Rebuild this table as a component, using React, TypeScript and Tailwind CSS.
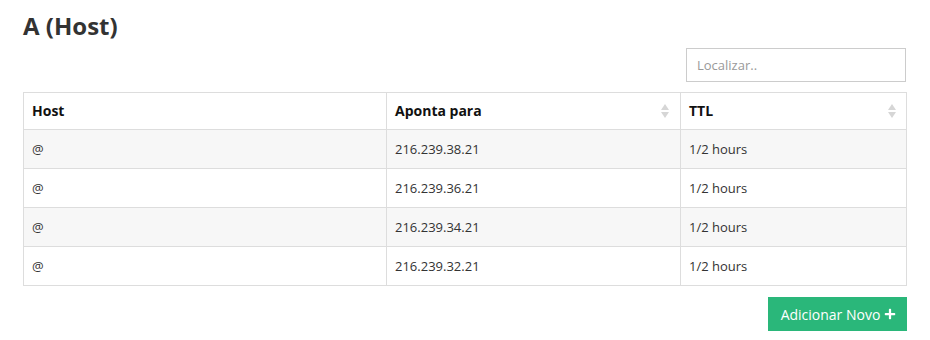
import { FaPlus } from 'react-icons/fa'

interface HostRecord {
    host: string
    target: string
    ttl: string
}

const records: HostRecord[] = [
    { host: '@', target: '216.239.38.21', ttl: '1/2 hours' },
    { host: '@', target: '216.239.36.21', ttl: '1/2 hours' },
    { host: '@', target: '216.239.34.21', ttl: '1/2 hours' },
    { host: '@', target: '216.239.32.21', ttl: '1/2 hours' },
]

const SortIcon = () => (
    <svg width="8" height="14" viewBox="0 0 8 14" className="ml-auto">
        <path d="M4 0 L8 6 L0 6 Z" fill="#d6d6d6" />
        <path d="M4 14 L8 8 L0 8 Z" fill="#d6d6d6" />
    </svg>
)

const App = () => {
    return (
        <div className="w-[930px] h-[340px] bg-white text-[#333] font-['Open_Sans',sans-serif] pl-[23px] pr-[23px]">
            <h2 className="text-[24px] font-bold leading-[30px] pt-[11px] text-[#333]">A (Host)</h2>

            <div className="flex justify-end mt-[7px]">
                <input
                    className="w-[220px] h-[34px] mr-[1px] border border-[#ccc] px-[10px] text-[13px] placeholder:text-[#999] outline-none"
                    placeholder="Localizar.."
                />
            </div>

            <table className="w-[884px] mt-[10px] border-collapse border border-[#ddd] text-[13px]">
                <thead>
                    <tr>
                        <th className="w-[363px] border border-[#ddd] px-[8px] py-[8px] text-left font-bold text-[14px] leading-[20px] text-[#111]">Host</th>
                        <th className="w-[294px] border border-[#ddd] px-[8px] py-[8px] text-left font-bold text-[14px] leading-[20px] text-[#111]">
                            <div className="flex items-center pr-[3px]">
                                Aponta para
                                <SortIcon />
                            </div>
                        </th>
                        <th className="border border-[#ddd] px-[8px] py-[8px] text-left font-bold text-[14px] leading-[20px] text-[#111]">
                            <div className="flex items-center pr-[2px]">
                                TTL
                                <SortIcon />
                            </div>
                        </th>
                    </tr>
                </thead>
                <tbody>
                    {records.map((r, i) => (
                        <tr key={r.target} className={i % 2 === 0 ? 'bg-[#f7f7f7]' : 'bg-white'}>
                            <td className="border border-[#ddd] px-[8px] py-[8px] leading-[22px]">{r.host}</td>
                            <td className="border border-[#ddd] px-[8px] py-[8px] leading-[22px]">{r.target}</td>
                            <td className="border border-[#ddd] px-[8px] py-[8px] leading-[22px]">{r.ttl}</td>
                        </tr>
                    ))}
                </tbody>
            </table>

            <div className="flex justify-end mt-[11px]">
                <button className="h-[34px] w-[139px] bg-[#2ab77a] text-white text-[14px] flex items-center justify-center gap-[4px] pl-[2px]">
                    Adicionar Novo
                    <FaPlus className="text-[12px]" />
                </button>
            </div>
        </div>
    )
}

export default App
